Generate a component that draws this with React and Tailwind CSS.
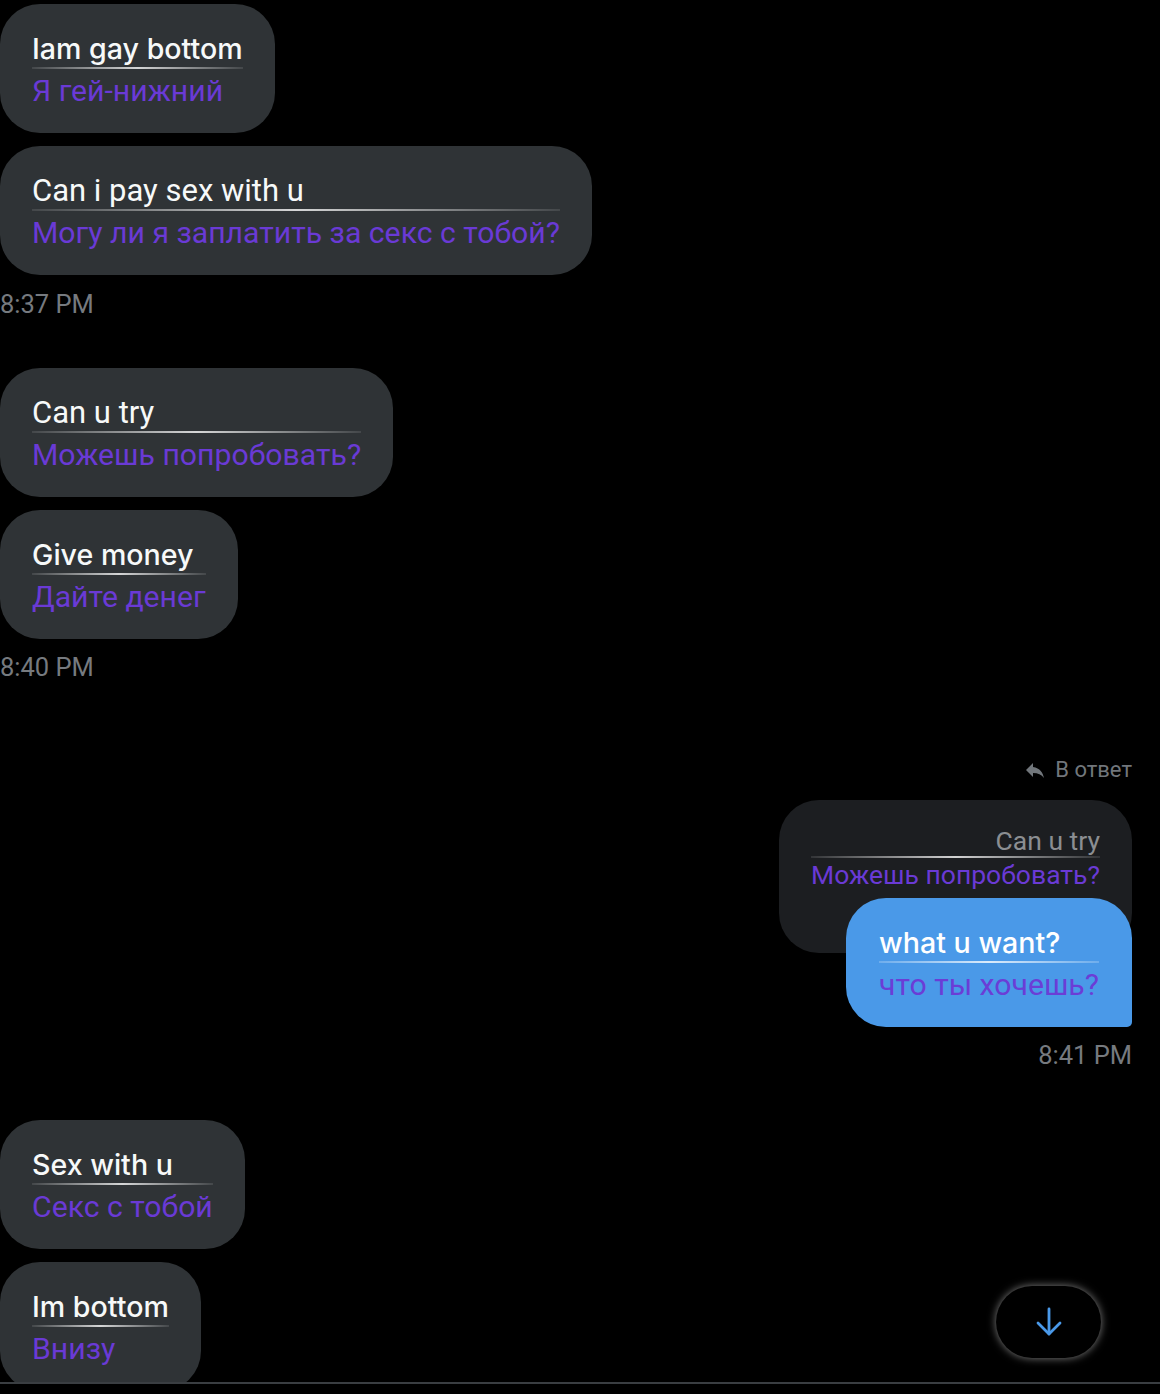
import React from "react";

const INTER = "font-[Inter,sans-serif] font-medium text-[28.6px]";
const ROBOTO = "font-[Roboto,sans-serif] text-[31px]";
const TR = "font-[Roboto,sans-serif] text-[30.2px]";

// separator line under the original text
function Sep({ className = "" }) {
  return (
    <div
      className={`h-[2px] bg-linear-to-r from-white/10 via-white/80 to-white/10 ${className}`}
    />
  );
}

function Bubble({ text, tr, font = INTER }) {
  return (
    <div className="rounded-[40px] bg-[#2f3336] px-[32px] pt-[27px] pb-[24px]">
      <div className={`${font} leading-[36px] text-[#f7f9f9] whitespace-nowrap`}>
        {text}
      </div>
      <Sep />
      <div className={`${TR} mt-[4px] leading-[36px] text-[#6a3ad5] whitespace-nowrap`}>
        {tr}
      </div>
    </div>
  );
}

function Time({ children, className = "" }) {
  return (
    <div className={`font-[Roboto,sans-serif] text-[25.5px] leading-[30px] text-[#767a7f] ${className}`}>
      {children}
    </div>
  );
}

export default function App() {
  return (
    <div className="relative h-[1394px] w-full overflow-hidden bg-black">
      <div className="flex h-[1382px] flex-col items-start overflow-hidden pt-[4px] pr-[28px]">
        <Bubble text="Iam gay bottom" tr="Я гей-нижний" />
        <div className="mt-[13px]">
          <Bubble text="Can i pay sex with u" tr="Могу ли я заплатить за секс с тобой?" font={ROBOTO} />
        </div>
        <Time className="mt-[14px]">8:37 PM</Time>

        <div className="mt-[49px]">
          <Bubble text="Can u try" tr="Можешь попробовать?" font={ROBOTO} />
        </div>
        <div className="mt-[13px]">
          <Bubble text="Give money" tr="Дайте денег" />
        </div>
        <Time className="mt-[13px]">8:40 PM</Time>

        {/* reply */}
        <div className="mt-[75px] flex h-[26px] items-center gap-[8px] self-end">
          <svg width="24" height="24" viewBox="0 0 24 24" fill="#71767b">
            <path d="M10 9V5l-7 7 7 7v-4.1c5 0 8.5 1.6 11 5.1-1-5-4-10-11-11z" />
          </svg>
          <span className="font-[Roboto,sans-serif] text-[22px] leading-[26px] text-[#71767b]">В ответ</span>
        </div>
        <div className="mt-[17px] flex flex-col items-end self-end">
          <div className="rounded-[40px] bg-[#1c1e21] px-[32px] pt-[26px] pb-[63px] text-right">
            <div className="font-[Roboto,sans-serif] text-[26.5px] leading-[30px] text-[#8b8e92] whitespace-nowrap">
              Can u try
            </div>
            <Sep />
            <div className="mt-[2px] font-[Roboto,sans-serif] text-[26.5px] leading-[30px] text-[#6a3ad5] whitespace-nowrap">
              Можешь попробовать?
            </div>
          </div>
          <div className="relative -mt-[55px] rounded-[40px] rounded-br-[5px] bg-[#4a99e8] px-[33px] pt-[27px] pb-[24px]">
            <div className={`${INTER} leading-[36px] text-white whitespace-nowrap`}>
              what u want?
            </div>
            <Sep className="from-white/20 via-white/70 to-white/20" />
            <div className={`${TR} mt-[4px] leading-[36px] text-[#6b3dd6] whitespace-nowrap`}>
              что ты хочешь?
            </div>
          </div>
        </div>
        <Time className="mt-[13px] self-end">8:41 PM</Time>

        <div className="mt-[50px]">
          <Bubble text="Sex with u" tr="Секс с тобой" />
        </div>
        <div className="mt-[13px]">
          <Bubble text="Im bottom" tr="Внизу" />
        </div>
      </div>
      <div className="h-[2px] w-full bg-[#3a3e42]" />

      {/* scroll to bottom */}
      <button className="absolute right-[59px] bottom-[36px] flex h-[72px] w-[105px] items-center justify-center rounded-full bg-black shadow-[0_0_8px_rgba(255,255,255,0.5)]">
        <svg width="26" height="30" viewBox="0 0 26 30" fill="none" stroke="#4a99e9" strokeWidth="2.8" strokeLinecap="round" strokeLinejoin="round">
          <path d="M13 2v25" />
          <path d="M2 16l11 11 11-11" />
        </svg>
      </button>
    </div>
  );
}
